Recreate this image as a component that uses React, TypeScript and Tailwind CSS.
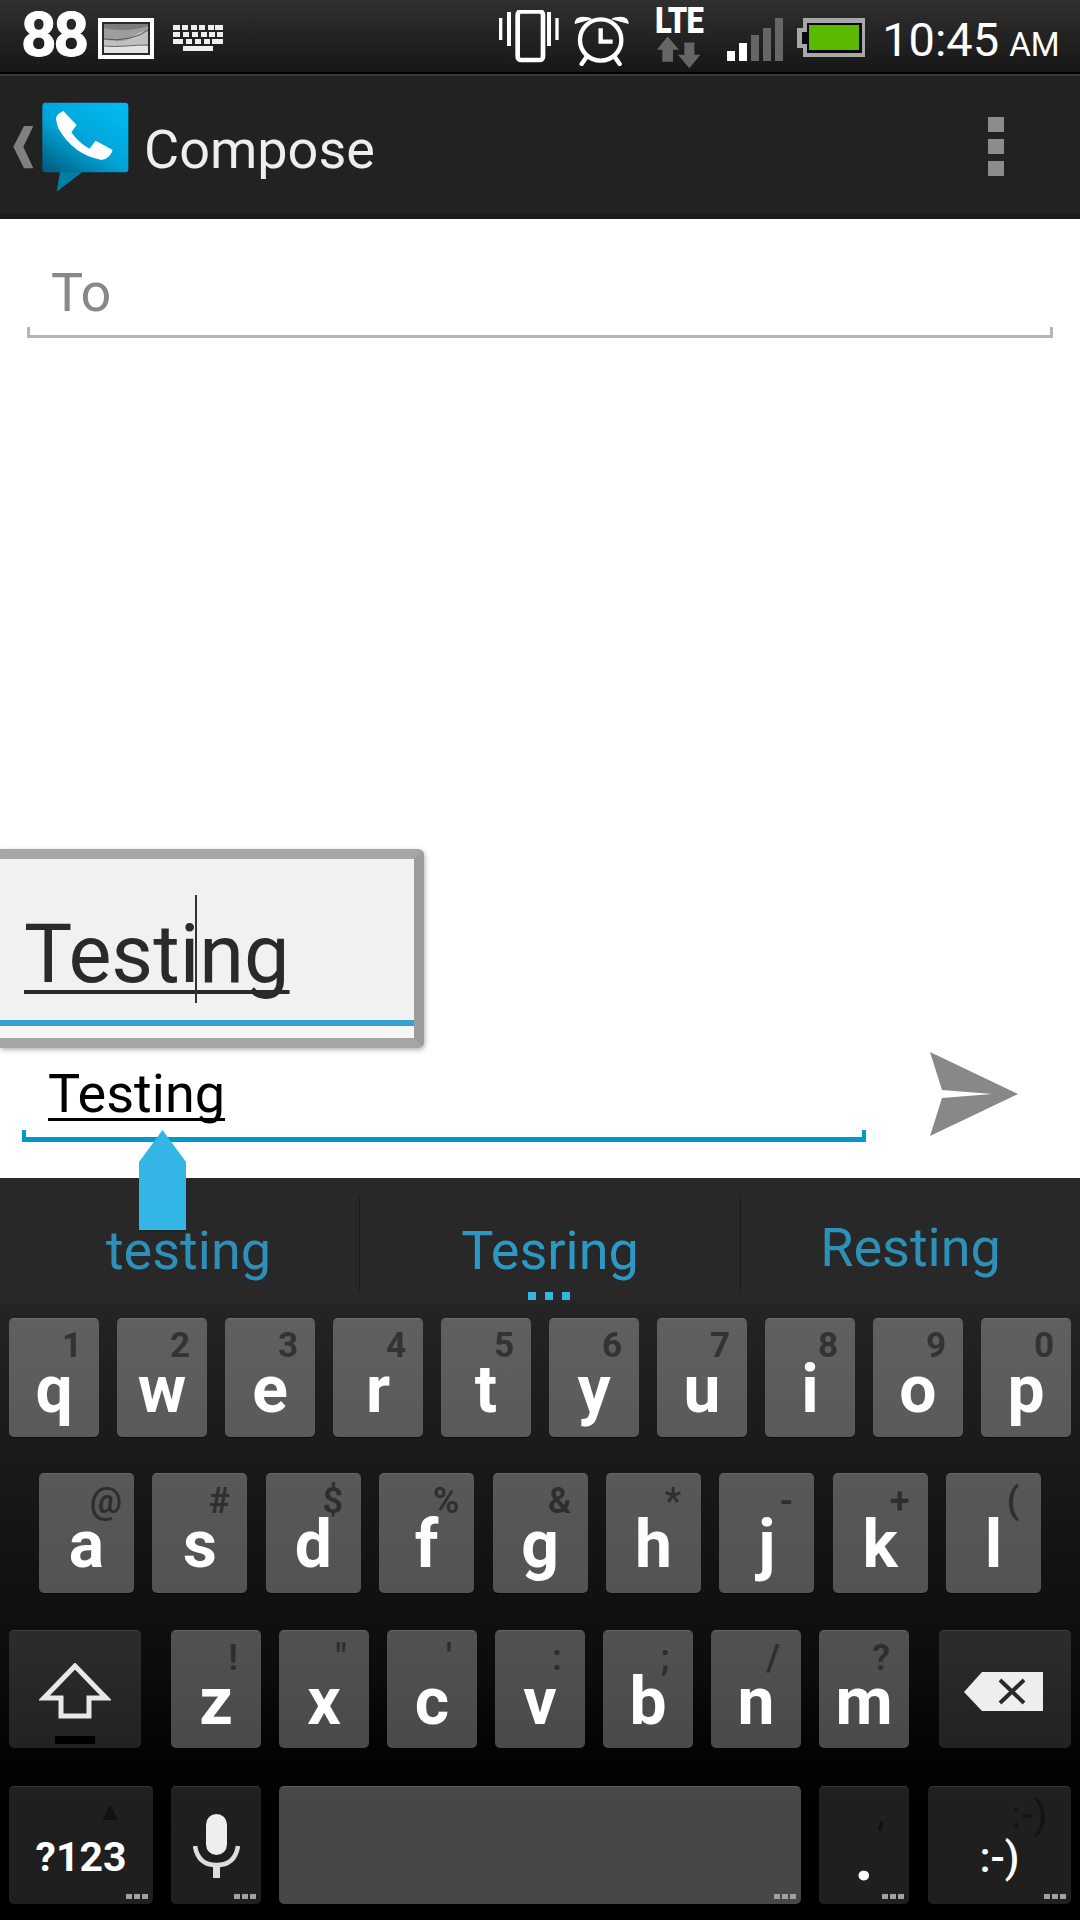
import React from 'react';

interface KeyProps {
  label?: string;
  hint?: string;
  width: string;
  dark?: boolean;
  dots?: boolean;
  labelClass?: string;
  hintClass?: string;
  children?: React.ReactNode;
}

const Key: React.FC<KeyProps> = ({ label, hint, width, dark, dots, labelClass, hintClass, children }) => (
  <div
    className={`relative h-full shrink-0 rounded-[5px] border-t border-white/10 shadow-[0_1px_0_rgba(0,0,0,0.5)] ${width} ${
      dark ? 'bg-white/[0.12]' : 'bg-white/[0.28]'
    }`}
  >
    {hint && (
      <span
        className={
          hintClass ??
          'absolute top-[9px] right-0 w-[56px] text-center text-[36px] leading-[36px] font-semibold text-[#2e2e2e]'
        }
      >
        {hint}
      </span>
    )}
    {label && (
      <div className={labelClass ?? 'pt-[38px] text-center text-[66px] leading-[66px] font-bold text-white'}>{label}</div>
    )}
    {children}
    {dots && (
      <div className="absolute right-[5px] bottom-[5px] flex gap-[2px]">
        <span className="h-[5px] w-[6px] bg-[#a0a0a0]" />
        <span className="h-[5px] w-[6px] bg-[#a0a0a0]" />
        <span className="h-[5px] w-[6px] bg-[#a0a0a0]" />
      </div>
    )}
  </div>
);

const digits: Record<string, string> = { q: '1', w: '2', e: '3', r: '4', t: '5', y: '6', u: '7', i: '8', o: '9', p: '0' };
const homeRow: [string, string][] = [
  ['a', '@'], ['s', '#'], ['d', '$'], ['f', '%'], ['g', '&'], ['h', '*'], ['j', '-'], ['k', '+'], ['l', '('],
];
const bottomRow: [string, string][] = [
  ['z', '!'], ['x', '"'], ['c', "'"], ['v', ':'], ['b', ';'], ['n', '/'], ['m', '?'],
];

const StatusBar = () => (
  <div className="flex h-[72px] shrink-0 items-start bg-gradient-to-b from-[#303030] to-[#171717]">
    <span className="mt-[2px] ml-[21px] text-[62px] leading-[66px] font-bold tracking-[-3px] whitespace-nowrap text-white [-webkit-text-stroke:1px_white]">
      88
    </span>
    <svg className="mt-[18px] ml-[12px]" width="56" height="41" viewBox="0 0 56 41">
      <rect width="56" height="41" fill="#fff" />
      <rect x="4" y="4" width="48" height="33" fill="#2b2b2b" />
      <rect x="6" y="6" width="44" height="29" fill="#e4e4e4" />
      <path d="M6 6h44v22q-12-2-22 0t-22-1z" fill="#c0c0c0" />
      <path d="M6 6h44v6q-10 2-18 8t-26 1z" fill="#9d9d9d" />
      <path d="M6 6h44v2q-12 4-24 4t-20-2z" fill="#7c7c7c" />
      <path d="M6 28q10 1 22 0t22-1" fill="none" stroke="#666" />
      <path d="M6 21q14 2 26-1t18-8" fill="none" stroke="#555" />
    </svg>
    <svg className="mt-[25px] ml-[19px]" width="50" height="27" viewBox="0 0 50 27" fill="#eee">
      <rect x="0" y="0" width="7" height="5" />
      <rect x="9" y="0" width="6" height="5" />
      <rect x="18" y="0" width="6" height="5" />
      <rect x="26" y="0" width="6" height="5" />
      <rect x="35" y="0" width="6" height="5" />
      <rect x="42" y="0" width="8" height="5" />
      <rect x="0" y="7" width="7" height="5" />
      <rect x="10" y="7" width="6" height="5" />
      <rect x="19" y="7" width="6" height="5" />
      <rect x="28" y="7" width="6" height="5" />
      <rect x="36" y="7" width="6" height="5" />
      <rect x="44" y="7" width="6" height="5" />
      <rect x="0" y="14" width="10" height="5" />
      <rect x="13" y="14" width="6" height="5" />
      <rect x="22" y="14" width="6" height="5" />
      <rect x="31" y="14" width="6" height="5" />
      <rect x="39" y="14" width="11" height="5" />
      <rect x="10" y="21" width="30" height="5" />
    </svg>
    <svg className="mt-[10px] ml-[276px]" width="130" height="56" viewBox="0 0 390 168">
      <g fill="#fff">
        <rect x="0" y="24" width="10" height="66" />
        <rect x="24" y="6" width="12" height="102" />
        <rect x="144" y="6" width="12" height="102" />
        <rect x="169" y="24" width="10" height="66" />
      </g>
      <rect x="56" y="-1" width="76" height="146" rx="10" fill="none" stroke="#fff" strokeWidth="14" transform="translate(0 5)" />
      <circle cx="305" cy="90" r="62" fill="none" stroke="#fff" strokeWidth="13" />
      <path d="M305 55v40h36" fill="none" stroke="#fff" strokeWidth="13" />
      <path d="M227 42q0-28 40-20q10 2 12 6zM389 42q0-28-40-20q-10 2-12 6z" fill="#fff" />
      <path d="M262 142l-14 20M348 142l14 20" stroke="#fff" strokeWidth="13" strokeLinecap="round" />
    </svg>
    <div className="mt-[4px] ml-[26px] flex w-[48px] flex-col">
      <span className="h-[30px] origin-left scale-x-[0.86] text-[36px] leading-[34px] font-black tracking-[-1px] text-white">
        LTE
      </span>
      <svg className="mt-[2px] ml-[2px]" width="46" height="33" viewBox="0 0 138 96" fill="#666">
        <path d="M32 0l34 40H48v36H16V40H-1zM82 18h30v37h18l-33 40-34-40h19z" />
      </svg>
    </div>
    <svg className="mt-[18px] ml-[24px]" width="56" height="43" viewBox="0 0 56 43">
      <rect x="0" y="33" width="8" height="10" fill="#fff" />
      <rect x="12" y="25" width="8" height="18" fill="#fff" />
      <rect x="24" y="17" width="8" height="26" fill="#666" />
      <rect x="36" y="10" width="8" height="33" fill="#666" />
      <rect x="48" y="0" width="8" height="43" fill="#666" />
    </svg>
    <svg className="mt-[18px] ml-[14px]" width="68" height="39" viewBox="0 0 68 39">
      <path d="M6 0h62v39H6V30H0V10h6z" fill="#a8a8a8" />
      <path d="M10 5h55v30H10V26H5V14h5z" fill="#0a0a0a" />
      <rect x="12" y="7" width="50" height="25" fill="#5cb800" />
    </svg>
    <div className="mt-[16px] ml-[17px] flex items-baseline text-white">
      <span className="text-[47px] leading-[47px]">10:45</span>
      <span className="ml-[10px] text-[33px] leading-[33px]">AM</span>
    </div>
  </div>
);

const ActionBar = () => (
  <div className="flex h-[147px] shrink-0 flex-col">
    <div className="h-[2px] bg-[#000]" />
    <div className="flex h-[140px] items-start border-t-2 border-[#383838] bg-[#222]">
      <svg className="mt-[14px]" width="140" height="110" viewBox="0 0 420 330">
        <defs>
          <linearGradient id="bubble" x1="0.85" y1="0.05" x2="0.1" y2="1">
            <stop offset="0" stopColor="#00b9f2" />
            <stop offset="0.55" stopColor="#00a2d6" />
            <stop offset="1" stopColor="#005f82" />
          </linearGradient>
        </defs>
        <path d="M100 108H72L40 170l32 65h28L70 170z" fill="#808080" />
        <path d="M180 245L170 305l78-60z" fill="#007ea6" />
        <rect x="127" y="38" width="258" height="209" rx="10" fill="url(#bubble)" />
        <path
          d="M168 88Q168 72 190 63L230 105L214 127Q235 158 268 176L287 152L338 180Q330 205 305 210Q220 195 175 115Q170 100 168 88Z"
          fill="#fff"
        />
      </svg>
      <span className="mt-[47px] ml-[4px] text-[54px] leading-[54px] text-[#eee]">Compose</span>
      <div className="mt-[41px] ml-auto mr-[76px] flex flex-col gap-[7px]">
        <span className="h-[15px] w-[16px] bg-[#8c8c8c]" />
        <span className="h-[15px] w-[16px] bg-[#8c8c8c]" />
        <span className="h-[15px] w-[16px] bg-[#8c8c8c]" />
      </div>
    </div>
    <div className="h-[5px] bg-[#1a1a1a]" />
  </div>
);

const Composer = () => (
  <div className="relative min-h-0 flex-1 bg-white">
    <div className="relative mx-[27px] mt-[45px] h-[74px] border-x-[3px] border-b-[3px] border-x-transparent border-b-[#b5b5b5]">
      <span className="absolute top-[2px] left-[21px] text-[54px] leading-[54px] text-[#888]">To</span>
      <span className="absolute -bottom-[3px] -left-[3px] h-[11px] w-[3px] bg-[#b5b5b5]" />
      <span className="absolute -right-[3px] -bottom-[3px] h-[11px] w-[3px] bg-[#b5b5b5]" />
    </div>

    {/* zoom popup over the field */}
    <div className="absolute top-[630px] left-0 h-[199px] w-[424px] rounded-r-[6px] border-y-[10px] border-r-[10px] border-y-[#a6a6a6] border-r-[#9c9c9c] bg-[#f1f1f1] shadow-[1px_2px_5px_rgba(0,0,0,0.3)]">
      <span className="absolute top-[56px] left-[24px] text-[81px] leading-[80px] text-[#2a2a2a] underline decoration-[4px] underline-offset-[8px] [text-decoration-skip-ink:none]">
        Testing
      </span>
      <span className="absolute top-[36px] left-[195px] h-[108px] w-[2px] bg-[#333]" />
      <div className="absolute top-[161px] right-0 bottom-0 left-0 bg-[#f6f6f6]">
        <div className="h-[6px] bg-[#35a2cd]" />
      </div>
    </div>

    <div className="absolute right-0 bottom-[36px] left-0 flex items-end">
      <div className="relative ml-[22px] h-[83px] w-[844px]">
        <span className="absolute top-[8px] left-[26px] text-[54px] leading-[54px] text-black underline decoration-[3px] underline-offset-[6px] [text-decoration-skip-ink:none]">
          Testing
        </span>
        <div className="absolute right-0 bottom-0 left-0 h-[12px] border-x-[4px] border-b-[5px] border-x-[#0099cc] border-b-[#0099cc]" />
      </div>
      <svg className="mb-[6px] ml-[64px]" width="88" height="84" viewBox="0 0 88 84">
        <path d="M0 0L88 42L0 84L12 46L62 42L12 38z" fill="#888" />
      </svg>
    </div>

    {/* text selection handle */}
    <svg className="absolute top-[911px] left-[139px]" width="47" height="102" viewBox="0 0 47 102">
      <path d="M23.5 0L47 32V102H0V32z" fill="#33b5e5" />
      <rect y="100" width="47" height="2" fill="#222" />
    </svg>
  </div>
);

const Candidates = () => (
  <div className="flex h-[125px] items-start bg-[#282828] text-[54px] leading-[54px] text-[#2e8fb8]">
    <div className="w-[359px] pt-[46px] pl-[18px] text-center">testing</div>
    <div className="mt-[18px] h-[96px] w-px bg-[#1c1c1c]" />
    <div className="relative w-[380px] pt-[46px] text-center text-[#2e98c4]">
      Tesring
      <div className="absolute top-[114px] left-[168px] flex gap-[9px]">
        <span className="h-[8px] w-[8px] bg-[#33b5e5]" />
        <span className="h-[8px] w-[8px] bg-[#33b5e5]" />
        <span className="h-[8px] w-[8px] bg-[#33b5e5]" />
      </div>
    </div>
    <div className="mt-[18px] h-[96px] w-px bg-[#1c1c1c]" />
    <div className="flex-1 pt-[43px] text-center">Resting</div>
  </div>
);

const Keyboard = () => (
  <div className="flex h-[742px] shrink-0 flex-col">
    <Candidates />
    <div className="flex flex-1 flex-col bg-gradient-to-b from-[#242424] via-[#0c0c0c] via-60% to-[#000]">
      <div className="mt-[15px] flex h-[119px] gap-[18px] px-[9px]">
        {Object.entries(digits).map(([letter, digit]) => (
          <Key
            key={letter}
            label={letter}
            hint={digit}
            width="w-[90px]"
            hintClass="absolute top-[9px] right-0 w-[54px] text-center text-[35px] leading-[36px] font-bold text-[#333]"
          />
        ))}
      </div>
      <div className="mt-[36px] flex h-[120px] justify-between px-[39px]">
        {homeRow.map(([letter, symbol]) => (
          <Key key={letter} label={letter} hint={symbol} width="w-[95px]" />
        ))}
      </div>
      <div className="mt-[37px] flex h-[118px] px-[9px]">
        <Key width="w-[132px]" dark>
          <svg className="absolute top-[32px] left-[30px]" width="72" height="56" viewBox="0 0 72 56">
            <path d="M36 3L67 35H50V53H22V35H5z" fill="none" stroke="#e8e8e8" strokeWidth="5" />
          </svg>
          <span className="absolute bottom-[4px] left-[46px] h-[8px] w-[40px] bg-black" />
        </Key>
        <div className="ml-[30px] flex gap-[18px]">
          {bottomRow.map(([letter, symbol]) => (
            <Key key={letter} label={letter} hint={symbol} width="w-[90px]" />
          ))}
        </div>
        <div className="ml-[30px]">
          <Key width="w-[132px]" dark>
            <svg className="absolute top-[41px] left-[25px]" width="79" height="39" viewBox="0 0 79 39">
              <path d="M18 0H79V39H18L0 20z" fill="#eee" />
              <path d="M36 8L60 31M60 8L36 31" stroke="#2a2a2a" strokeWidth="4" />
            </svg>
          </Key>
        </div>
      </div>
      <div className="mt-[38px] flex h-[118px] px-[9px]">
        <Key
          width="w-[144px]"
          dark
          dots
          label="?123"
          labelClass="pt-[50px] text-center text-[41px] leading-[41px] font-bold text-white"
        >
          <span className="absolute top-[18px] left-[93px] h-0 w-0 border-x-[8px] border-b-[15px] border-x-transparent border-b-[#111]" />
        </Key>
        <div className="ml-[18px]">
          <Key width="w-[90px]" dark dots>
            <svg className="absolute top-[27px] left-[22px]" width="47" height="64" viewBox="0 0 47 64">
              <rect x="13" y="0" width="21" height="41" rx="10.5" fill="#eee" />
              <path d="M2 32q3 19 21.5 19T45 32" fill="none" stroke="#ddd" strokeWidth="4.5" />
              <rect x="20" y="50" width="7" height="14" fill="#ddd" />
            </svg>
          </Key>
        </div>
        <div className="ml-[18px]">
          <Key width="w-[522px]" dots />
        </div>
        <div className="ml-[18px]">
          <Key
            width="w-[90px]"
            dark
            dots
            label="."
            hint=","
            hintClass="absolute top-[9px] right-0 w-[56px] text-center text-[35px] leading-[36px] font-medium text-[#111]"
          />
        </div>
        <div className="ml-[19px]">
          <Key
            width="w-[143px]"
            dark
            dots
            label=":-)"
            labelClass="pt-[50px] text-center text-[42px] leading-[42px] font-medium text-white"
            hint=":-)"
            hintClass="absolute top-[9px] right-[24px] text-[38px] leading-[38px] font-medium text-[#141414]"
          />
        </div>
      </div>
    </div>
  </div>
);

export default function App() {
  return (
    <div className="flex h-[1920px] w-[1080px] flex-col overflow-hidden font-['Roboto',sans-serif]">
      <StatusBar />
      <ActionBar />
      <Composer />
      <Keyboard />
    </div>
  );
}
